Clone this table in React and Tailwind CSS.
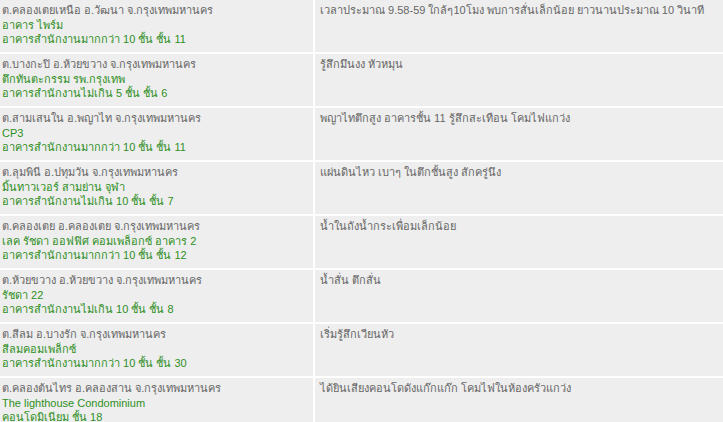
const rows = [
  {
    area: 'ต.คลองเตยเหนือ อ.วัฒนา จ.กรุงเทพมหานคร',
    place: 'อาคาร ไพร์ม',
    building: 'อาคารสำนักงานมากกว่า 10 ชั้น ชั้น 11',
    note: 'เวลาประมาณ 9.58-59 ใกล้ๆ10โมง พบการสั่นเล็กน้อย ยาวนานประมาณ 10 วินาที',
  },
  {
    area: 'ต.บางกะปิ อ.ห้วยขวาง จ.กรุงเทพมหานคร',
    place: 'ตึกทันตะกรรม รพ.กรุงเทพ',
    building: 'อาคารสำนักงานไม่เกิน 5 ชั้น ชั้น 6',
    note: 'รู้สึกมึนงง หัวหมุน',
  },
  {
    area: 'ต.สามเสนใน อ.พญาไท จ.กรุงเทพมหานคร',
    place: 'CP3',
    building: 'อาคารสำนักงานมากกว่า 10 ชั้น ชั้น 11',
    note: 'พญาไทตึกสูง อาคารชั้น 11 รู้สึกสะเทือน โคมไฟแกว่ง',
  },
  {
    area: 'ต.ลุมพินี อ.ปทุมวัน จ.กรุงเทพมหานคร',
    place: 'มิ้นทาวเวอร์ สามย่าน จุฬา',
    building: 'อาคารสำนักงานไม่เกิน 10 ชั้น ชั้น 7',
    note: 'แผ่นดินไหว เบาๆ ในตึกชั้นสูง สักครู่นึง',
  },
  {
    area: 'ต.คลองเตย อ.คลองเตย จ.กรุงเทพมหานคร',
    place: 'เลค รัชดา ออฟฟิศ คอมเพล็อกซ์ อาคาร 2',
    building: 'อาคารสำนักงานมากกว่า 10 ชั้น ชั้น 12',
    note: 'น้ำในถังน้ำกระเพื่อมเล็กน้อย',
  },
  {
    area: 'ต.ห้วยขวาง อ.ห้วยขวาง จ.กรุงเทพมหานคร',
    place: 'รัชดา 22',
    building: 'อาคารสำนักงานไม่เกิน 10 ชั้น ชั้น 8',
    note: 'น้ำสั่น ตึกสั่น',
  },
  {
    area: 'ต.สีลม อ.บางรัก จ.กรุงเทพมหานคร',
    place: 'สีลมคอมเพล็กซ์',
    building: 'อาคารสำนักงานมากกว่า 10 ชั้น ชั้น 30',
    note: 'เริ่มรู้สึกเวียนหัว',
  },
  {
    area: 'ต.คลองต้นไทร อ.คลองสาน จ.กรุงเทพมหานคร',
    place: 'The lighthouse Condominium',
    building: 'คอนโดมิเนียม ชั้น 18',
    note: 'ได้ยินเสียงคอนโดดังแก๊กแก๊ก โคมไฟในห้องครัวแกว่ง',
  },
]

function App() {
  return (
    <div className="w-[723px] h-[422px] overflow-hidden bg-white font-['Liberation_Sans','Tahoma',sans-serif] text-[11px] leading-[14.5px]">
      <div className="-mt-[2px] flex flex-col">
        {rows.map((r, i) => (
          <div key={i} className="flex h-[54px] border-t-2 border-white">
            <div className="w-[313px] shrink-0 bg-[#eeeeee] pl-[2px] pt-[3px]">
              <div className="text-[#666666]">{r.area}</div>
              <div className="text-[#2f8f24]">{r.place}</div>
              <div className="text-[#2f8f24]">{r.building}</div>
            </div>
            <div className="flex-1 ml-[2px] bg-[#eeeeee] pl-[5px] pt-[3px] text-[#666666]">
              {r.note}
            </div>
          </div>
        ))}
      </div>
    </div>
  )
}

export default App
